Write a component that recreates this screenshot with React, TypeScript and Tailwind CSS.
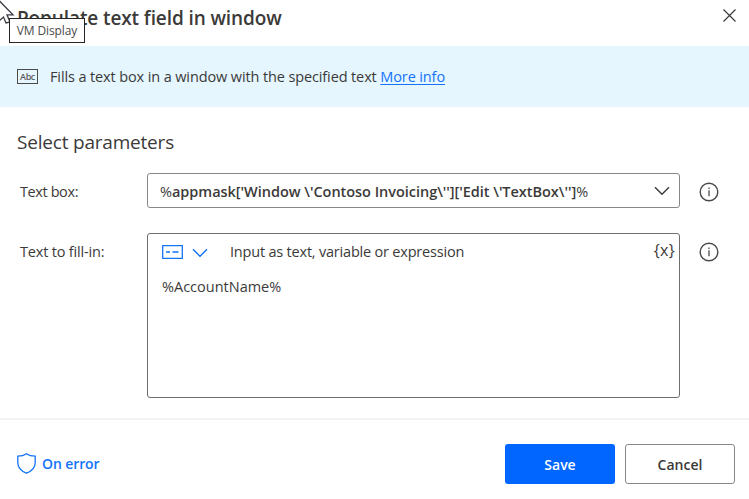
import React from "react";

function InfoIcon() {
  return (
    <svg width="20" height="20" viewBox="0 0 20 20" fill="none" stroke="#4b4a48" strokeWidth="1.4">
      <circle cx="10" cy="10" r="8.8" />
      <path d="M10 8.3V14.3M10 5.6V7" strokeWidth="1.3" />
    </svg>
  );
}

function Chevron() {
  return (
    <svg width="16" height="10" viewBox="0 0 16 10" fill="none" stroke="currentColor" strokeWidth="1.4">
      <path d="M1 1.2L8 8.3L15 1.2" />
    </svg>
  );
}

export default function App() {
  return (
    <div className="relative flex h-[499px] w-[749px] flex-col overflow-hidden bg-white font-['Open_Sans','Noto_Sans',sans-serif] text-[14.5px] leading-5 text-[#3b3a39]">
      <header className="flex h-[46px] shrink-0 items-start justify-between pl-[17px] pr-[13px]">
        <h1 className="mt-[6px] whitespace-nowrap text-[19px] font-semibold leading-6 tracking-[-0.1px]">Populate text field in window</h1>
        <button aria-label="Close" className="mt-[9px]">
          <svg width="13" height="13" viewBox="0 0 13 13" fill="none" stroke="#3b3a39" strokeWidth="1.2">
            <path d="M0.5 0.5L12.5 12.5M12.5 0.5L0.5 12.5" />
          </svg>
        </button>
      </header>

      <section className="flex h-[61px] shrink-0 items-center bg-[#e5f6ff] pl-[17px]">
        <span className="flex h-[15px] w-[21px] items-center justify-center border border-[#4b4a48] text-[9px] font-semibold leading-none tracking-[-0.4px] text-[#5b5a58]">Abc</span>
        <p className="ml-3 mt-px whitespace-nowrap tracking-[-0.12px]">
          Fills a text box in a window with the specified text{" "}
          <a className="text-[#1473f9] underline underline-offset-2">More info</a>
        </p>
      </section>

      <main className="flex h-[311px] shrink-0 flex-col pl-[17px] pr-[30px]">
        <h2 className="mt-[22px] h-[26px] whitespace-nowrap text-[19px] leading-[26px] tracking-[-0.2px]">Select parameters</h2>

        <div className="mt-[18px] flex items-center">
          <label className="mt-[3px] w-[130px] whitespace-nowrap pl-[3px] tracking-[-0.4px]">Text box:</label>
          <div className="flex h-[35px] w-[533px] items-center justify-between rounded-[3px] border border-[#8a8886] pl-3 pr-[9px]">
            <span className="mt-[3px] whitespace-nowrap font-semibold tracking-[-0.03px]"><span className="font-normal">%</span>{"appmask['Window \\'Contoso Invoicing\\'']['Edit \\'TextBox\\'']"}<span className="font-normal">%</span></span>
            <Chevron />
          </div>
          <div className="ml-[19px] mt-[3px]"><InfoIcon /></div>
        </div>

        <div className="mt-[25px] flex items-start">
          <label className="mt-[9px] w-[130px] whitespace-nowrap pl-[3px] tracking-[-0.18px]">Text to fill-in:</label>
          <div className="h-[165px] w-[533px] rounded-[3px] border border-[#706e6c]">
            <div className="flex h-[35px] items-center pl-[14px] pr-1">
              <svg width="21" height="14" viewBox="0 0 21 14" fill="none" stroke="#1473f9" strokeWidth="1.3">
                <path d="M0.7 0.7H20.3V13.3H0.7ZM4 7H8M10.5 7H16.5" />
              </svg>
              <span className="ml-[9px] mt-0.5 text-[#1473f9]"><Chevron /></span>
              <span className="ml-[22px] whitespace-nowrap tracking-[-0.2px]">Input as text, variable or expression</span>
              <span className="ml-auto -mt-1 text-[16px] tracking-[0.3px]">{"{x}"}</span>
            </div>
            <p className="mt-2 pl-[14px]">%AccountName%</p>
          </div>
          <div className="ml-[19px] mt-[9px]"><InfoIcon /></div>
        </div>
      </main>

      <footer className="flex h-[81px] items-start border-t-2 border-[#f3f2f1] pl-[17px] pr-[14px]">
        <button className="mt-[33px] flex items-center gap-[6px] font-semibold text-[#1473f9]">
          <svg width="19" height="21" viewBox="0 0 19 21" fill="none" stroke="currentColor" strokeWidth="1.3">
            <path d="M9.5 0.8C7.3 2.4 4.2 3.2 0.8 3.2V9.5C0.8 14.8 4 18.1 9.5 20.2C15 18.1 18.2 14.8 18.2 9.5V3.2C14.8 3.2 11.7 2.4 9.5 0.8Z" />
          </svg>
          <span className="mt-px whitespace-nowrap text-[14px] tracking-[-0.1px]">On error</span>
        </button>
        <button className="ml-auto mt-6 h-10 w-[110px] rounded-[3px] bg-[#0066ff] pt-0.5 text-[14px] font-semibold text-white">Save</button>
        <button className="ml-[10px] mt-6 h-10 w-[110px] rounded-[3px] border border-[#8a8886] pt-0.5 text-[14px] font-semibold">Cancel</button>
      </footer>

      <svg className="absolute left-0 top-0" width="16" height="26" viewBox="0 0 16 26" fill="white" stroke="#3b3a45" strokeWidth="1.3">
        <path d="M-1 0.5L13 14.8H7L10 22L6 23L3.5 17L-1 21Z" />
      </svg>
      <div className="absolute left-[9px] top-[18px] flex h-[25px] w-[76px] items-center justify-center whitespace-nowrap border border-[#252525] bg-white text-[12px] tracking-[-0.12px] text-[#4a4a4a]">VM Display</div>
    </div>
  );
}
